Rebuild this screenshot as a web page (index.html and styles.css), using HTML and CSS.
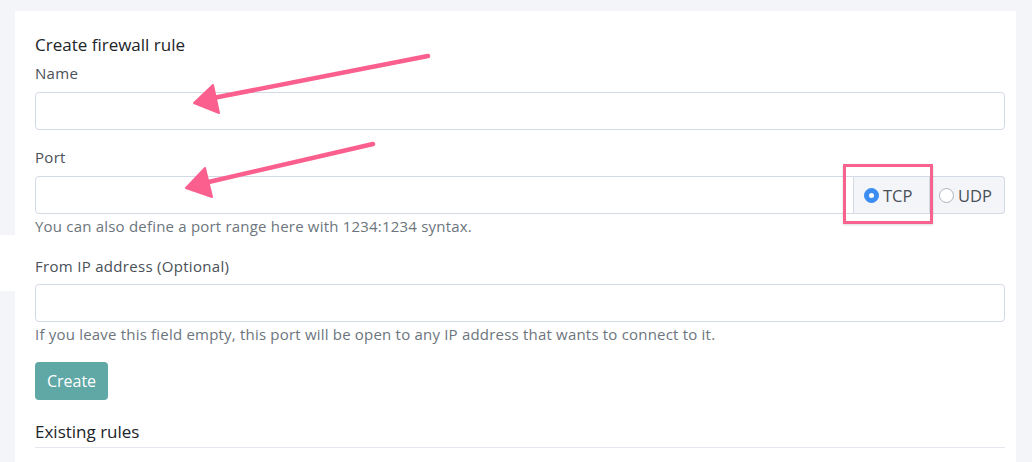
FILE: index.html
```html
<!DOCTYPE html>
<html>
<head>
<meta charset="utf-8">
<link rel="stylesheet" href="styles.css">
</head>
<body>
<div class="page">
  <div class="card">
    <h2 class="title">Create firewall rule</h2>
    <label class="label">Name</label>
    <div class="input"></div>

    <label class="label label-port">Port</label>
    <div class="group">
      <div class="input input-grow"></div>
      <div class="addon addon-tcp"><span class="radio radio-on"></span>TCP</div>
      <div class="addon addon-udp"><span class="radio"></span>UDP</div>
    </div>
    <p class="help">You can also define a port range here with 1234:1234 syntax.</p>

    <label class="label label-ip">From IP address (Optional)</label>
    <div class="input input-ip"></div>
    <p class="help">If you leave this field empty, this port will be open to any IP address that wants to connect to it.</p>

    <button class="btn">Create</button>

    <h2 class="title title-existing">Existing rules</h2>
    <div class="rule"></div>
  </div>
  <div class="strip"></div>
  <div class="highlight"></div>
  <svg class="arrows" width="1032" height="462" viewBox="0 0 1032 462">
    <g fill="#fa5f8e" stroke="#fa5f8e" stroke-linejoin="round">
      <line x1="428" y1="56" x2="208" y2="99" stroke-width="4.5" stroke-linecap="round"/>
      <polygon points="194,103 213,85 219,113" stroke-width="2"/>
      <line x1="373" y1="144" x2="200" y2="184" stroke-width="4.5" stroke-linecap="round"/>
      <polygon points="186,188 205,168 212,197" stroke-width="2"/>
    </g>
  </svg>
</div>
</body>
</html>
```

FILE: styles.css
```css
* { box-sizing: border-box; }
html, body { margin: 0; padding: 0; }
body {
  background: #f4f5f9;
  font-family: "Open Sans", "Noto Sans", sans-serif;
  color: #212529;
  width: 1032px;
  height: 462px;
  overflow: hidden;
}
.page {
  position: relative;
  padding: 11px 16px 0 15px;
  height: 462px;
}
.card {
  background: #fff;
  padding: 22px 11px 20px 20px;
  height: 451px;
}
.title {
  margin: 0;
  font-size: 17px;
  font-weight: 400;
  line-height: 24px;
  color: #212529;
}
.label {
  display: block;
  font-size: 15px;
  letter-spacing: 0.3px;
  line-height: 24px;
  margin-top: 4px;
  color: #495057;
}
.label-port { margin-top: 15px; }
.label-ip { margin-top: 18px; }
.input {
  height: 38px;
  margin-top: 7px;
  border: 1px solid #d4d9e6;
  border-radius: 4px;
  background: #fff;
}
.input-ip { margin-top: 6px; }
.group {
  display: flex;
  margin-top: 7px;
  height: 38px;
}
.input-grow {
  flex: 1;
  margin-top: 0;
  border-radius: 4px 0 0 4px;
}
.addon {
  display: flex;
  align-items: center;
  gap: 4px;
  background: #f4f5f9;
  border: 1px solid #d4d9e6;
  border-left: 0;
  font-size: 16.5px;
  color: #495057;
}
.addon-tcp { width: 76px; padding-left: 10px; }
.addon-udp { width: 75px; padding-left: 9px; border-radius: 0 4px 4px 0; }
.radio {
  width: 15px;
  height: 15px;
  border-radius: 50%;
  border: 1px solid #adb5bd;
  background: #fff;
}
.radio-on {
  background: #3c8df2;
  border-color: #3c8df2;
  position: relative;
}
.radio-on::after {
  content: "";
  position: absolute;
  left: 4px;
  top: 4px;
  width: 5px;
  height: 5px;
  border-radius: 50%;
  background: #fff;
}
.help {
  margin: 2px 0 0;
  font-size: 15px;
  letter-spacing: 0.2px;
  line-height: 20px;
  color: #6c757d;
}
.btn {
  display: block;
  margin-top: 18px;
  width: 73px;
  height: 38px;
  border: 0;
  border-radius: 4px;
  background: #5fa8a6;
  color: #fff;
  font-family: inherit;
  font-size: 16px;
  padding: 0;
}
.title-existing {
  margin-top: 18px;
  font-size: 17px;
  line-height: 27px;
}
.rule {
  margin-top: 2px;
  border-top: 1px solid #e3e6ee;
}
.strip {
  position: absolute;
  left: 0;
  top: 235px;
  width: 15px;
  height: 56px;
  background: #fff;
}
.highlight {
  position: absolute;
  left: 843px;
  top: 164px;
  width: 90px;
  height: 60px;
  border: 3px solid #f7628f;
  box-shadow: 0 1px 2px rgba(0,0,0,0.15);
}
.arrows {
  position: absolute;
  left: 0;
  top: 0;
  pointer-events: none;
}
```
